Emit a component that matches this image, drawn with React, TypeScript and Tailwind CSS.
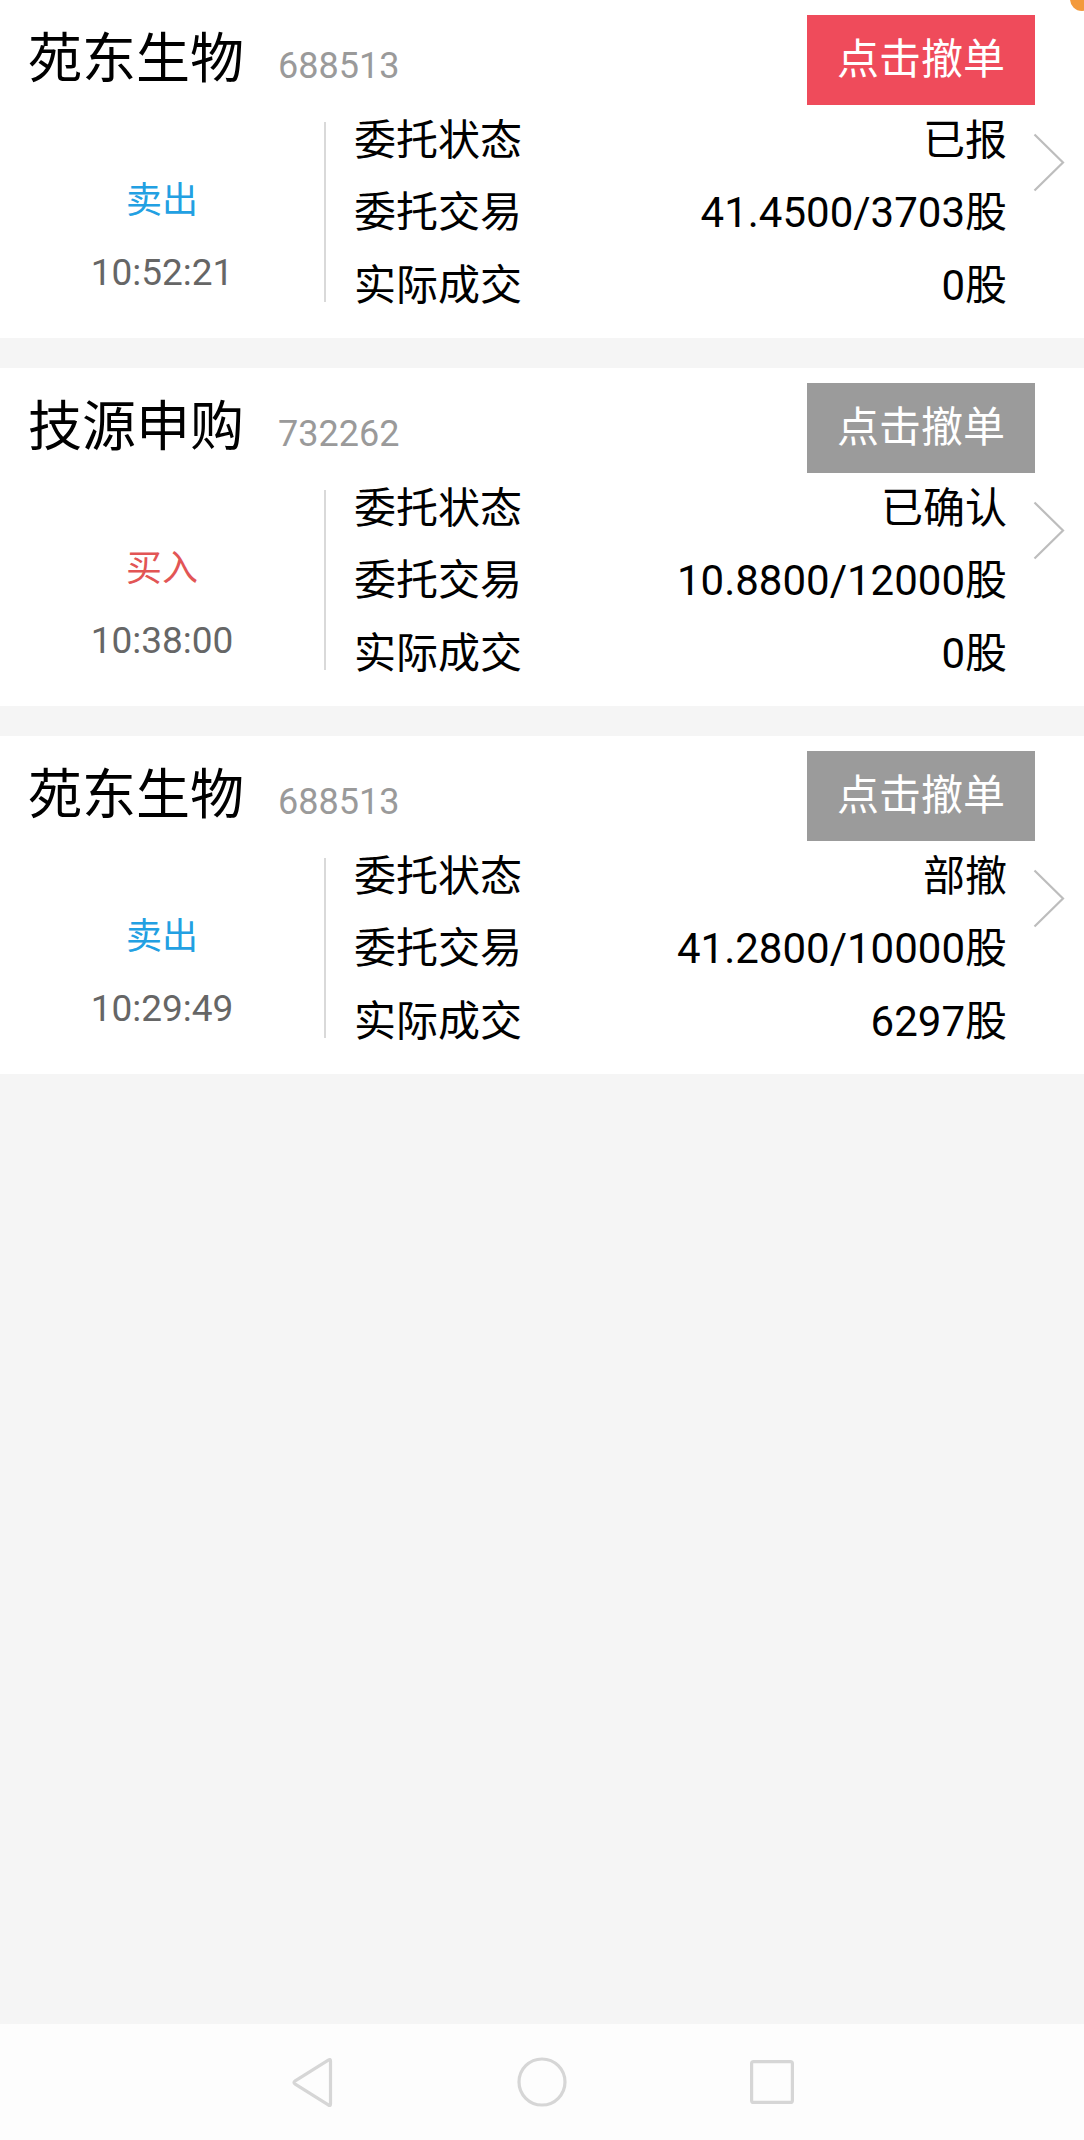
import React from 'react';

type Order = {
  name: string;
  code: string;
  side: '卖出' | '买入';
  time: string;
  status: string;
  trade: string;
  filled: string;
  active: boolean;
};

const orders: Order[] = [
  { name: '苑东生物', code: '688513', side: '卖出', time: '10:52:21', status: '已报', trade: '41.4500/3703股', filled: '0股', active: true },
  { name: '技源申购', code: '732262', side: '买入', time: '10:38:00', status: '已确认', trade: '10.8800/12000股', filled: '0股', active: false },
  { name: '苑东生物', code: '688513', side: '卖出', time: '10:29:49', status: '部撤', trade: '41.2800/10000股', filled: '6297股', active: false },
];

const Chevron = () => (
  <svg width="32" height="59" viewBox="0 0 32 59" fill="none">
    <path d="M1.5 1.5 L30 29.5 L1.5 57.5" stroke="#bdbdbd" strokeWidth="2.2" />
  </svg>
);

const OrderCard = ({ order }: { order: Order }) => {
  const rows = [
    ['委托状态', order.status],
    ['委托交易', order.trade],
    ['实际成交', order.filled],
  ];

  return (
    <div className="bg-white h-[338px]">
      {/* Header */}
      <div className="flex items-center justify-between pl-[28px] pr-[49px] pt-[15px]">
        <div className="flex items-baseline">
          <span className="text-[54px] leading-none text-black">{order.name}</span>
          <span className="ml-[34px] text-[36px] leading-none text-[#9a9a9a]">{order.code}</span>
        </div>
        <button
          className={
            order.active
              ? 'w-[228px] h-[90px] bg-[#ef4b5b] text-white text-[42px] leading-none'
              : 'w-[228px] h-[90px] bg-[#9b9b9b] text-white text-[42px] leading-none'
          }
        >
          点击撤单
        </button>
      </div>

      {/* Body */}
      <div className="flex h-[218px] mt-[-1px]">
        <div className="w-[324px] pt-[61px] flex flex-col">
          <div
            className={
              order.side === '卖出'
                ? 'h-[72px] flex items-center justify-center text-[36px] text-[#22a0e2]'
                : 'h-[72px] flex items-center justify-center text-[36px] text-[#e25555]'
            }
          >
            {order.side}
          </div>
          <div className="h-[72px] flex items-center justify-center text-[37px] text-[#666666]">{order.time}</div>
        </div>
        <div className="w-[2px] h-[180px] mt-[18px] bg-[#d9d9d9]" />
        <div className="flex-1 ml-[28px] flex flex-col">
          {rows.map(([label, value]) => (
            <div key={label} className="h-[72.5px] flex items-center justify-between text-[42px] text-black">
              <span>{label}</span>
              <span>{value}</span>
            </div>
          ))}
        </div>
        <div className="ml-[26px] mr-[19px] mt-[29px] self-start">
          <Chevron />
        </div>
      </div>
    </div>
  );
};

export default function App() {
  return (
    <div className="relative h-[2140px] overflow-hidden flex flex-col bg-[#f5f5f5] font-['Roboto','Noto_Sans_CJK_SC',sans-serif]">
      <div className="flex flex-col gap-[30px]">
        {orders.map((o, i) => (
          <OrderCard key={i} order={o} />
        ))}
      </div>

      <div className="flex-1" />

      {/* System nav bar */}
      <div className="h-[116px] bg-[#fdfdfd] flex items-center justify-center gap-[183px]">
        <svg width="43" height="51" viewBox="0 0 43 51" fill="none">
          <path
            d="M39.5 4 L39.5 47 Q39.5 49.5 37.3 47.9 L4.2 27.2 Q1.8 25.5 4.2 23.8 L37.3 3.1 Q39.5 1.5 39.5 4 Z"
            stroke="#d6d6d6"
            strokeWidth="3.2"
            strokeLinejoin="round"
          />
        </svg>
        <svg width="50" height="50" viewBox="0 0 50 50" fill="none">
          <circle cx="25" cy="25" r="23" stroke="#d6d6d6" strokeWidth="3.2" />
        </svg>
        <svg width="44" height="44" viewBox="0 0 44 44" fill="none">
          <rect x="1.6" y="1.6" width="40.8" height="40.8" rx="2" stroke="#d6d6d6" strokeWidth="3.2" />
        </svg>
      </div>

      {/* notification dot peeking from top-right corner */}
      <div className="absolute right-[-10px] top-[-13px] w-6 h-6 rounded-full bg-[#f39a3c]" />
    </div>
  );
}
